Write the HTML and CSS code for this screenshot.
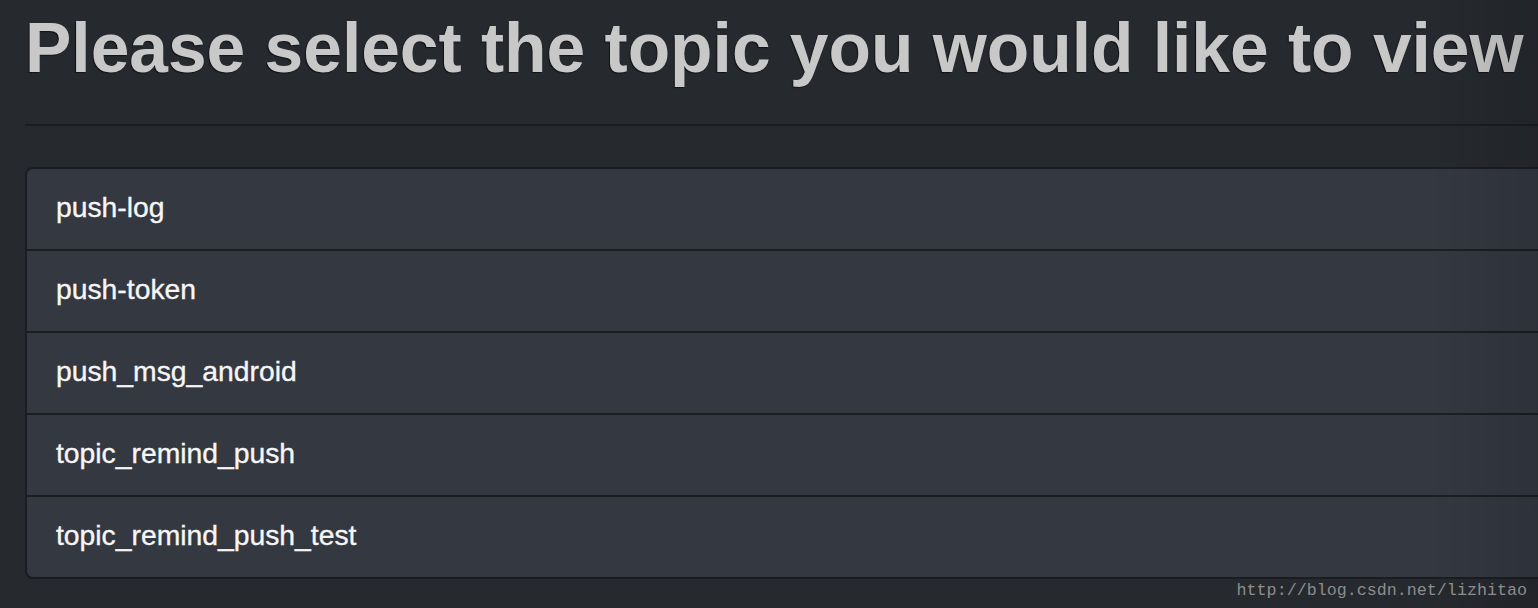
FILE: index.html
```html
<!DOCTYPE html>
<html>
<head>
<meta charset="utf-8">
<link rel="stylesheet" href="styles.css">
</head>
<body>
<div class="page">
  <h1 class="title">Please select the topic you would like to view</h1>
  <ul class="topics">
    <li class="topic">push-log</li>
    <li class="topic">push-token</li>
    <li class="topic">push_msg_android</li>
    <li class="topic">topic_remind_push</li>
    <li class="topic">topic_remind_push_test</li>
  </ul>
</div>
<div class="vignette"></div>
<div class="watermark">http://blog.csdn.net/lizhitao</div>
</body>
</html>
```
FILE: styles.css
```css
html, body {
  margin: 0;
  padding: 0;
  height: 100%;
  overflow: hidden;
}
body {
  background: #26292e;
  font-family: "Liberation Sans", Arial, sans-serif;
  position: relative;
}
.page {
  width: 1600px;
  padding: 9px 0 0 25px;
}
.title {
  margin: 0;
  font-size: 69.5px;
  line-height: 79px;
  font-weight: bold;
  color: #c8c8c8;
  white-space: nowrap;
  text-shadow: -1px 1px 1px rgba(0,0,0,0.55);
  padding-bottom: 36px;
  border-bottom: 2px solid #1b1d21;
}
.topics {
  list-style: none;
  margin: 41px 0 0 0;
  padding: 0;
  border: 2px solid #1b1d21;
  border-radius: 8px;
  background: #343841;
  overflow: hidden;
}
.topic {
  padding: 18px 28px 22px 29px;
  font-size: 28.3px;
  line-height: 40px;
  color: #f6f6f6;
  -webkit-text-stroke: 0.35px #f6f6f6;
  border-top: 2px solid #1b1d21;
}
.topic:first-child {
  border-top: none;
}
.vignette {
  position: absolute;
  inset: 0;
  pointer-events: none;
  background: linear-gradient(to right, rgba(0,0,0,0) calc(100% - 110px), rgba(0,0,0,0.12) 100%);
}
.watermark {
  position: absolute;
  right: 11px;
  top: 580px;
  font-family: "Liberation Mono", "Courier New", monospace;
  font-size: 16.7px;
  line-height: 22px;
  color: #8d8d8d;
}
```
